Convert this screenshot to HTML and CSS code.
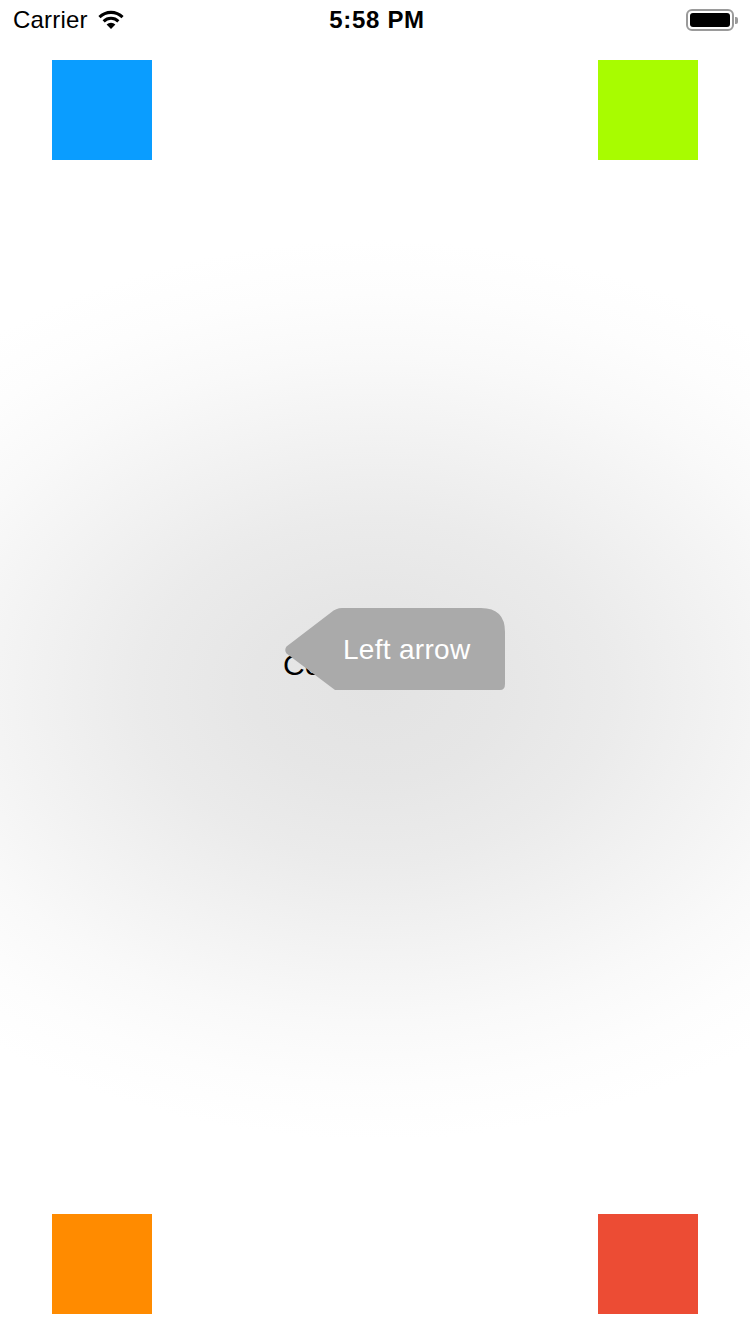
FILE: index.html
```html
<!DOCTYPE html>
<html>
<head>
<meta charset="utf-8">
<link rel="stylesheet" href="styles.css">
</head>
<body>
<div class="page">
  <div class="statusbar">
    <div class="sb-left">
      <span class="carrier">Carrier</span>
      <svg class="wifi" width="28" height="20" viewBox="0 0 28 20">
        <path d="M14 20 L9.6 15.4 A6.4 6.4 0 0 1 18.4 15.4 Z" fill="#000"/>
        <path d="M5.6 11.2 A12 12 0 0 1 22.4 11.2 L20.3 13.4 A9 9 0 0 0 7.7 13.4 Z" fill="#000"/>
        <path d="M1.4 7 A18 18 0 0 1 26.6 7 L24.5 9.2 A15 15 0 0 0 3.5 9.2 Z" fill="#000"/>
      </svg>
    </div>
    <div class="sb-time">5:58 PM</div>
    <div class="sb-right">
      <div class="battery"><div class="battery-fill"></div></div>
      <div class="battery-cap"></div>
    </div>
  </div>

  <div class="row top">
    <div class="square blue"></div>
    <div class="square green"></div>
  </div>

  <div class="middle">
    <div class="label">Center</div>
    <div class="tooltip">
      <svg class="tooltip-bg" width="221" height="82" viewBox="0 0 221 82">
        <path d="M2.5 38.5 Q0 42 2.5 45.5 L51 82 L216 82 Q221 82 221 76 L221 24 Q221 0 197 0 L58 0 Q52 0 47 4.5 Z" fill="#aaaaaa"/>
      </svg>
      <span class="tooltip-text">Left arrow</span>
    </div>
  </div>

  <div class="row bottom">
    <div class="square orange"></div>
    <div class="square red"></div>
  </div>
</div>
</body>
</html>
```

FILE: styles.css
```css
html, body {
  margin: 0;
  padding: 0;
}
body {
  width: 750px;
  height: 1334px;
  overflow: hidden;
  font-family: "Liberation Sans", Arial, sans-serif;
  background-color: #ffffff;
  background-image: radial-gradient(ellipse 620px 450px at 375px 690px,
    #e3e3e3 0%, #e6e6e6 20%, #ebebeb 38%, #f2f2f2 56%, #f9f9f9 74%, #fdfdfd 88%, #ffffff 100%);
  background-repeat: no-repeat;
}
.page {
  display: flex;
  flex-direction: column;
  height: 1334px;
}
.statusbar {
  height: 40px;
  display: flex;
  align-items: center;
  justify-content: space-between;
  position: relative;
  padding: 0 13px 0 13px;
}
.sb-left {
  display: flex;
  align-items: center;
  gap: 9px;
}
.carrier {
  font-size: 24px;
  color: #000;
  letter-spacing: 0.2px;
}
.wifi {
  margin-top: -2px;
}
.sb-time {
  position: absolute;
  left: 0;
  right: 0;
  text-align: center;
  font-size: 24px;
  font-weight: bold;
  color: #000;
  letter-spacing: 0.7px;
  padding-left: 4px;
  pointer-events: none;
}
.sb-right {
  display: flex;
  align-items: center;
  margin-right: -1px;
}
.battery {
  border: 2px solid #9a9a9a;
  border-radius: 6px;
  padding: 2px;
  box-sizing: border-box;
  width: 48px;
  height: 22px;
}
.battery-fill {
  width: 100%;
  height: 100%;
  background: #000;
  border-radius: 3px;
}
.battery-cap {
  width: 3px;
  height: 7px;
  background: #9a9a9a;
  border-radius: 0 2px 2px 0;
  margin-left: 1px;
}
.row {
  display: flex;
  justify-content: space-between;
  padding: 0 52px;
}
.row.top {
  margin-top: 20px;
}
.row.bottom {
  margin-bottom: 20px;
}
.square {
  width: 100px;
  height: 100px;
}
.blue { background: #0a9dff; }
.green { background: #a8fc00; }
.orange { background: #ff8b00; }
.red { background: #ec4c34; }
.middle {
  flex: 1;
  position: relative;
}
.label {
  margin-top: 487px;
  margin-left: 283px;
  font-size: 30px;
  line-height: 36px;
  color: #000;
}
.tooltip {
  position: absolute;
  left: 284px;
  top: 448px;
  width: 221px;
  height: 82px;
  display: flex;
  align-items: center;
}
.tooltip-bg {
  position: absolute;
  left: 0;
  top: 0;
}
.tooltip-text {
  position: relative;
  margin-left: 59px;
  margin-top: 1px;
  font-size: 28px;
  color: #ffffff;
  letter-spacing: 0.3px;
}
```
